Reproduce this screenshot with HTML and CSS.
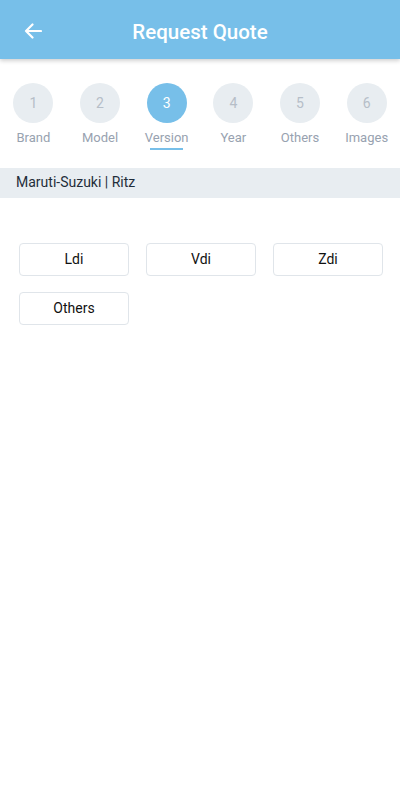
FILE: index.html
```html
<!DOCTYPE html>
<html>
<head>
<meta charset="utf-8">
<link rel="stylesheet" href="styles.css">
</head>
<body>
<header class="appbar">
  <svg class="back" width="18" height="16" viewBox="0 0 18 16"><path d="M17 8H2M8.5 1.5L2 8l6.5 6.5" fill="none" stroke="#fff" stroke-width="2.2" stroke-linecap="round" stroke-linejoin="round"/></svg>
  <h1 class="title">Request Quote</h1>
</header>
<nav class="steps">
  <div class="step"><div class="circle">1</div><div class="label">Brand</div></div>
  <div class="step"><div class="circle">2</div><div class="label">Model</div></div>
  <div class="step active"><div class="circle">3</div><div class="label">Version</div><div class="bar"></div></div>
  <div class="step"><div class="circle">4</div><div class="label">Year</div></div>
  <div class="step"><div class="circle">5</div><div class="label">Others</div></div>
  <div class="step"><div class="circle">6</div><div class="label">Images</div></div>
</nav>
<div class="crumb">Maruti-Suzuki | Ritz</div>
<div class="options">
  <button class="opt">Ldi</button>
  <button class="opt">Vdi</button>
  <button class="opt">Zdi</button>
  <button class="opt">Others</button>
</div>
</body>
</html>
```
FILE: styles.css
```css
* { box-sizing: border-box; }
html, body { margin: 0; padding: 0; background: #fff; }
body { font-family: Roboto, "Noto Sans", sans-serif; width: 400px; height: 800px; overflow: hidden; }
.appbar {
  height: 59px;
  background: #77bfe9;
  display: flex;
  align-items: center;
  position: relative;
  box-shadow: 0 2px 4px rgba(0,0,0,0.18);
}
.back { position: absolute; left: 24px; top: 23px; }
.title {
  margin: 0;
  flex: 1;
  text-align: center;
  color: #fff;
  font-size: 20.5px;
  font-weight: 500;
  padding-top: 4px;
}
.steps {
  display: grid;
  grid-template-columns: repeat(6, 1fr);
  padding-top: 24px;
  height: 109px;
}
.step { display: flex; flex-direction: column; align-items: center; }
.circle {
  width: 40px; height: 40px; border-radius: 50%;
  background: #e8edf1;
  color: #b6bec8;
  font-size: 14px;
  display: flex; align-items: center; justify-content: center;
}
.step.active .circle { background: #77bfe9; color: #fff; }
.label { margin-top: 7px; font-size: 13px; color: #98a2b0; line-height: 16px; }
.bar { width: 33px; height: 2px; background: #77bfe9; margin-top: 2px; }
.crumb {
  background: #e8edf1;
  height: 30px;
  padding: 6px 16px 0;
  font-size: 14px;
  color: #1f2d3a;
}
.options {
  display: grid;
  grid-template-columns: repeat(3, 110px);
  column-gap: 17px;
  row-gap: 16px;
  padding: 45px 19px 0;
}
.opt {
  height: 33px;
  background: #fff;
  border: 1px solid #e0e5ea;
  border-radius: 4px;
  font-family: Roboto, "Noto Sans", sans-serif;
  font-size: 14px;
  color: #111;
  padding: 0 0 2px;
}
```
